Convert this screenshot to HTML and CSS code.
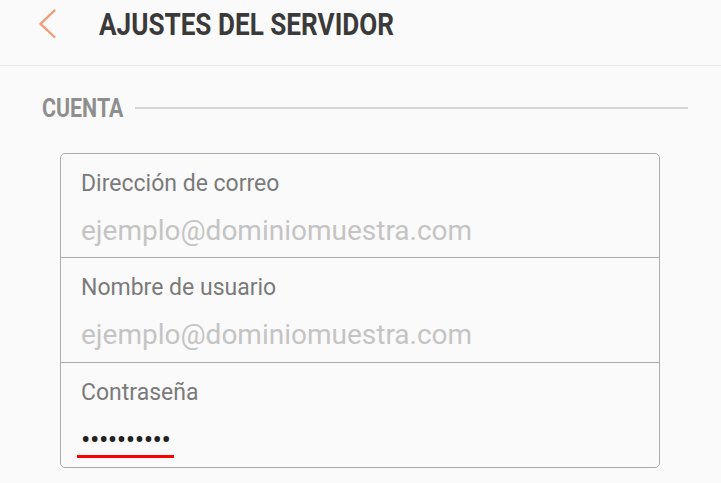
FILE: index.html
```html
<!DOCTYPE html>
<html lang="es">
<head>
<meta charset="utf-8">
<title>Ajustes del servidor</title>
<link rel="stylesheet" href="styles.css">
</head>
<body>
<header class="header">
  <span class="back">
    <svg width="20" height="30" viewBox="0 0 20 30"><path d="M18.5 1.5 L4.5 14.8 L18.5 28" fill="none" stroke="#f39a72" stroke-width="2.3" stroke-linecap="round" stroke-linejoin="round"/></svg>
  </span>
  <h1 class="title">AJUSTES DEL SERVIDOR</h1>
</header>
<main class="content">
  <div class="section-head">
    <h2 class="section-title">CUENTA</h2>
    <span class="section-line"></span>
  </div>
  <div class="card">
    <div class="field">
      <div class="label">Dirección de correo</div>
      <div class="value placeholder">ejemplo@dominiomuestra.com</div>
    </div>
    <div class="field">
      <div class="label">Nombre de usuario</div>
      <div class="value placeholder">ejemplo@dominiomuestra.com</div>
    </div>
    <div class="field">
      <div class="label">Contraseña</div>
      <div class="value password"><span class="dots">••••••••••</span></div>
    </div>
  </div>
</main>
</body>
</html>
```
FILE: styles.css
```css
html, body {
  margin: 0;
  padding: 0;
  background: #fafafa;
  font-family: Roboto, "Liberation Sans", sans-serif;
}
.header {
  height: 66px;
  border-bottom: 1px solid #e8e8e8;
  display: flex;
  align-items: flex-start;
  padding: 9px 0 0 36px;
  box-sizing: border-box;
}
.back {
  display: flex;
  width: 20px;
  height: 30px;
}
.title {
  margin: 0 0 0 43px;
  font-size: 31px;
  font-weight: 700;
  color: #3a3a3a;
  display: inline-block;
  transform: scaleX(0.843);
  transform-origin: left center;
  white-space: nowrap;
  line-height: 31px;
}
.content {
  padding: 27px 33px 0 42px;
}
.section-head {
  display: flex;
  align-items: center;
  height: 30px;
}
.section-title {
  margin: 0;
  font-size: 25px;
  font-weight: 700;
  color: #8e8e8e;
  transform: scaleX(0.855);
  transform-origin: left center;
  width: 81px;
  white-space: nowrap;
  line-height: 25px;
}
.section-line {
  flex: 1;
  height: 2px;
  background: #d6d6d6;
  margin-left: 12px;
  margin-top: -1px;
}
.card {
  margin: 30px 0 0 18px;
  width: 600px;
  box-sizing: border-box;
  border: 1px solid #ababab;
  border-radius: 5px;
}
.field {
  height: 105px;
  box-sizing: border-box;
  padding: 15.5px 0 0 20px;
  border-top: 1px solid #ababab;
}
.field:first-child {
  height: 103px;
  border-top: none;
}
.label {
  font-size: 23px;
  color: #7a7a7a;
  line-height: 28px;
}
.value {
  margin-top: 16px;
  font-size: 28px;
  line-height: 34px;
}
.placeholder {
  color: #c4c4c4;
}
.password {
  margin-top: 18px;
  line-height: 30px;
}
.dots {
  display: inline-block;
  color: #222;
  margin-left: -4px;
  padding: 0 4px;
  letter-spacing: -0.5px;
  border-bottom: 3px solid #ff0000;
}
```
